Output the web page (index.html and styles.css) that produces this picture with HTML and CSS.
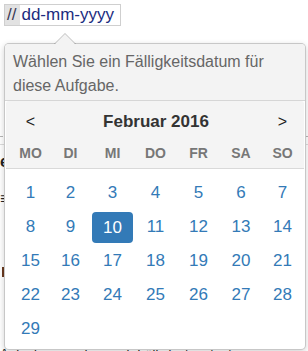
FILE: index.html
```html
<!DOCTYPE html>
<html lang="de">
<head>
<meta charset="utf-8">
<title>Datepicker</title>
<link rel="stylesheet" href="styles.css">
</head>
<body>
<div class="input-group">
  <span class="addon">//</span><span class="field">dd-mm-yyyy</span>
</div>

<div class="page">
  <div class="rule dashed"></div>
  <div class="rule"></div>
  <p class="frag frag-e">e</p>
  <p class="frag frag-eq">≡</p>
  <div class="bar"></div>
  <p class="footer-text">Aufgaben werden nach Fälligkeit sortiert</p>
</div>

<div class="popover">
  <div class="arrow"></div>
  <div class="popover-title">Wählen Sie ein Fälligkeitsdatum für diese Aufgabe.</div>
  <div class="popover-content">
    <div class="cal-head">
      <div class="cal-grid month-row">
        <span class="nav prev">&lt;</span>
        <strong class="month">Februar 2016</strong>
        <span class="nav next">&gt;</span>
      </div>
      <div class="cal-grid dow">
        <span>MO</span><span>DI</span><span>MI</span><span>DO</span><span>FR</span><span>SA</span><span>SO</span>
      </div>
    </div>
    <div class="cal-grid days">
      <span class="day">1</span><span class="day">2</span><span class="day">3</span><span class="day">4</span><span class="day">5</span><span class="day">6</span><span class="day">7</span>
      <span class="day">8</span><span class="day">9</span><span class="day"><b class="active">10</b></span><span class="day">11</span><span class="day">12</span><span class="day">13</span><span class="day">14</span>
      <span class="day">15</span><span class="day">16</span><span class="day">17</span><span class="day">18</span><span class="day">19</span><span class="day">20</span><span class="day">21</span>
      <span class="day">22</span><span class="day">23</span><span class="day">24</span><span class="day">25</span><span class="day">26</span><span class="day">27</span><span class="day">28</span>
      <span class="day">29</span>
    </div>
  </div>
</div>
</body>
</html>
```

FILE: styles.css
```css
* { box-sizing: border-box; }

html, body {
  margin: 0;
  padding: 0;
}

body {
  width: 308px;
  height: 351px;
  overflow: hidden;
  position: relative;
  background: #ffffff;
  font-family: "Liberation Sans", Arial, sans-serif;
  color: #333;
}

/* input */
.input-group {
  display: inline-flex;
  align-items: stretch;
  margin: 4px 0 0 4px;
  height: 22px;
  border: 1px solid #cfcfcf;
  background: #fff;
}

.addon {
  background: #e2e2e2;
  color: #3a3a55;
  font-size: 17px;
  line-height: 20px;
  padding: 0 4px 0 2px;
}

.field {
  color: #1b2c80;
  font-size: 17px;
  line-height: 20px;
  padding: 0 6px 0 1px;
}

/* background page fragments */
.page {
  padding-top: 110px;
  overflow: hidden;
}

.rule {
  height: 0;
  border-top: 1px solid #dcdcdc;
  margin-top: 7px;
}

.rule.dashed {
  margin-top: 0;
  border-top: 1px dashed #b5b5b5;
}

.frag {
  margin: 0;
  font-weight: bold;
  color: #222;
}

.frag-e {
  margin-top: 8px;
  font-size: 16px;
  line-height: 18px;
}

.frag-eq {
  margin-top: 20px;
  font-size: 16px;
  line-height: 16px;
}

.bar {
  margin-top: 60px;
  margin-left: 2px;
  width: 2px;
  height: 10px;
  background: #6b3a1f;
}

.footer-text {
  margin: 69px 0 0 0;
  font-size: 13px;
  line-height: 16px;
  color: #222;
  white-space: nowrap;
}

/* popover */
.popover {
  position: absolute;
  left: 4px;
  top: 43px;
  width: 302px;
  background: #fff;
  border: 1px solid rgba(0, 0, 0, 0.22);
  border-radius: 5px;
  box-shadow: 0 2px 6px rgba(0, 0, 0, 0.18);
}

.arrow {
  position: absolute;
  top: -11px;
  left: 49px;
  width: 0;
  height: 0;
}

.arrow::before,
.arrow::after {
  content: "";
  position: absolute;
  left: 0;
  width: 0;
  height: 0;
  border-style: solid;
  border-color: transparent;
}

.arrow::before {
  top: -0.5px;
  border-width: 0 11px 11px 11px;
  border-bottom-color: rgba(0, 0, 0, 0.25);
}

.arrow::after {
  top: 1px;
  left: 1px;
  border-width: 0 10px 10px 10px;
  border-bottom-color: #f3f3f3;
}

.popover-title {
  background: #f3f3f3;
  color: #666;
  font-size: 16px;
  line-height: 24px;
  padding: 6px 8px 2px 8px;
  border-bottom: 1px solid #d6d6d6;
  border-radius: 4px 4px 0 0;
}

.popover-content {
  padding: 0 1px 3px 1px;
}

.cal-head {
  background: #f4f4f4;
  border-bottom: 1px solid #d9d9d9;
  border-radius: 3px 3px 0 0;
  padding: 1px 0 4px 0;
}

.cal-grid {
  display: grid;
  grid-template-columns: 39px 41px 43px 43px 43px 42px 41px;
  margin-left: 5px;
}

.month-row {
  height: 40px;
  align-items: center;
}

.nav {
  font-size: 16px;
  color: #222;
  text-align: center;
}

.prev { grid-column: 1; }
.next { grid-column: 7; }

.month {
  grid-column: 2 / 7;
  text-align: center;
  font-size: 17px;
  font-weight: bold;
  color: #333;
}

.dow {
  height: 22px;
  align-items: center;
}

.dow span {
  text-align: center;
  font-size: 14px;
  font-weight: bold;
  color: #777;
}

.days {
  padding-top: 7px;
  grid-auto-rows: 34px;
}

.day {
  display: flex;
  align-items: center;
  justify-content: center;
  font-size: 17px;
  color: #337ab7;
}

.active {
  display: flex;
  align-items: center;
  justify-content: center;
  width: 41px;
  height: 31px;
  margin-top: 1px;
  background: #337ab7;
  color: #fff;
  font-weight: normal;
  border-radius: 4px;
}
```
